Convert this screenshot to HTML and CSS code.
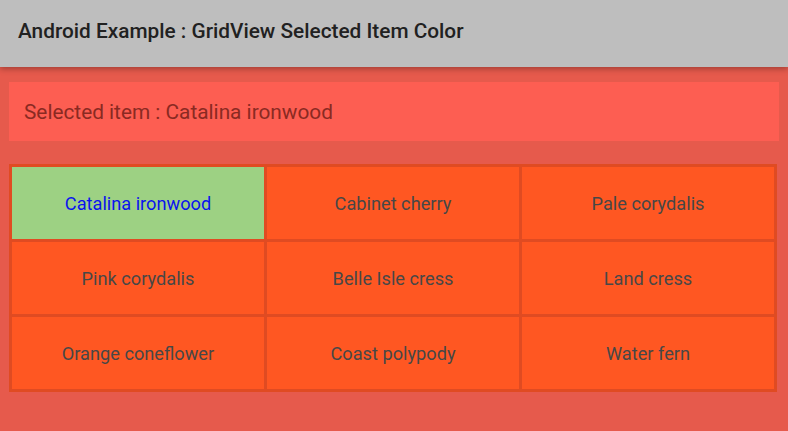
FILE: index.html
```html
<!DOCTYPE html>
<html lang="en">
<head>
  <meta charset="UTF-8" />
  <title>GridView Selected Item Color</title>
  <link rel="stylesheet" href="styles.css">
</head>
<body>
  <header class="toolbar">Android Example : GridView Selected Item Color</header>

  <main class="content">
    <div class="selected">Selected item : Catalina ironwood</div>

    <div class="grid">
      <div class="cell active">Catalina ironwood</div>
      <div class="cell">Cabinet cherry</div>
      <div class="cell">Pale corydalis</div>
      <div class="cell">Pink corydalis</div>
      <div class="cell">Belle Isle cress</div>
      <div class="cell">Land cress</div>
      <div class="cell">Orange coneflower</div>
      <div class="cell">Coast polypody</div>
      <div class="cell">Water fern</div>
    </div>
  </main>
</body>
</html>
```

FILE: styles.css
```css
html, body { margin: 0; height: 100%; }
body {
  font-family: Roboto, "Noto Sans", sans-serif;
  background: #e65a4c;
  overflow: hidden;
}
.toolbar {
  height: 67px;
  box-sizing: border-box;
  padding: 0 18px 5px;
  display: flex;
  align-items: center;
  background: #bebebe;
  color: #212121;
  font-size: 20.8px;
  font-weight: 500;
  box-shadow: 0 2px 6px rgba(0,0,0,0.3);
  position: relative;
}
.content { padding: 15px 9px; }
.selected {
  height: 59px;
  padding: 0 15px;
  display: flex;
  align-items: center;
  background: #fd5e52;
  color: #8a2a22;
  font-size: 20.8px;
}
.grid {
  margin-top: 23px;
  width: 762px;
  display: grid;
  grid-template-columns: repeat(3, 1fr);
  grid-auto-rows: 72px;
  gap: 3px;
  padding: 3px;
  background: #e04b22;
}
.cell {
  display: flex;
  align-items: center;
  justify-content: center;
  background: #ff5722;
  color: #474747;
  font-size: 18.2px;
}
.cell.active { background: #9dd183; color: #0a14ee; }
```
